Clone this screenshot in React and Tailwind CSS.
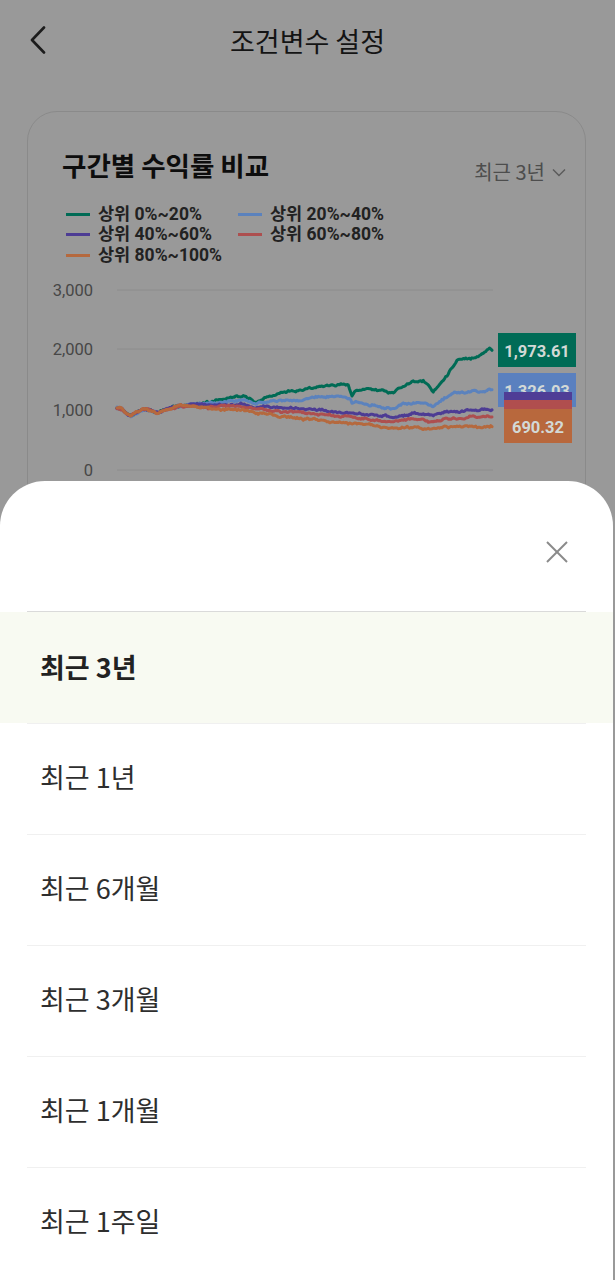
import React from "react";

const KR = '"Noto Sans CJK KR", "Noto Sans", sans-serif';
const RB = 'Roboto, "Noto Sans CJK KR", sans-serif';

function mulberry32(a) {
  return function () {
    a |= 0;
    a = (a + 0x6d2b79f5) | 0;
    let t = Math.imul(a ^ (a >>> 15), 1 | a);
    t = (t + Math.imul(t ^ (t >>> 7), 61 | t)) ^ t;
    return ((t ^ (t >>> 14)) >>> 0) / 4294967296;
  };
}

const START = [
  [117, 409], [122, 410], [127, 415], [131, 417], [136, 414], [143, 410],
  [150, 411], [158, 414], [165, 411], [172, 409], [180, 407],
];

const SERIES = [
  {
    color: "#006b55",
    seed: 11,
    keys: [
      [195, 405], [210, 403], [225, 400], [243, 397], [250, 400], [257, 403],
      [270, 398], [285, 393], [300, 391], [320, 388], [340, 386], [348, 387],
      [352, 398], [356, 392], [365, 390], [380, 392], [393, 395], [400, 390],
      [413, 383], [423, 382], [430, 388], [433, 393], [440, 385], [447, 377],
      [452, 370], [457, 362], [465, 360], [473, 360], [480, 357], [486, 353],
      [490, 349], [493, 352],
    ],
  },
  {
    color: "#5b82bd",
    seed: 23,
    keys: [
      [195, 406], [210, 404], [225, 403], [243, 401], [257, 404], [270, 402],
      [285, 402], [300, 402], [320, 398], [340, 397], [350, 400], [352, 405],
      [356, 403], [370, 405], [385, 408], [393, 410], [400, 407], [413, 403],
      [425, 404], [433, 408], [440, 403], [453, 394], [465, 394], [475, 392],
      [485, 393], [490, 390], [493, 392],
    ],
  },
  {
    color: "#4d3c94",
    seed: 37,
    keys: [
      [210, 406], [243, 405], [257, 408], [280, 409], [300, 410], [320, 411],
      [340, 412], [352, 414], [370, 415], [393, 418], [413, 414], [433, 416],
      [445, 412], [460, 413], [475, 411], [490, 410], [493, 411],
    ],
  },
  {
    color: "#ad4f4f",
    seed: 41,
    keys: [
      [210, 408], [243, 407], [257, 410], [280, 413], [300, 414], [320, 415],
      [352, 418], [370, 420], [393, 422], [413, 420], [433, 423], [445, 419],
      [460, 419], [475, 418], [490, 418], [493, 419],
    ],
  },
  {
    color: "#b5693e",
    seed: 53,
    keys: [
      [210, 410], [243, 411], [257, 414], [280, 417], [300, 419], [320, 421],
      [352, 424], [370, 426], [393, 430], [413, 428], [433, 430], [445, 427],
      [460, 427], [475, 428], [490, 428], [493, 428],
    ],
  },
];

function interp(keys, x) {
  for (let i = 0; i < keys.length - 1; i++) {
    const [x0, y0] = keys[i];
    const [x1, y1] = keys[i + 1];
    if (x >= x0 && x <= x1) {
      const t = (x - x0) / (x1 - x0 || 1);
      return y0 + (y1 - y0) * t;
    }
  }
  return keys[keys.length - 1][1];
}

function makePath(keys, seed) {
  const rand = mulberry32(seed);
  const all = [...START, ...keys];
  let r = 0;
  const pts = [];
  for (let x = 117; x <= 493; x += 1.25) {
    r += (rand() - 0.5) * 1.6;
    r *= 0.8;
    const y = interp(all, x) + r + (rand() - 0.5) * 1.2;
    pts.push(`${(x - 28).toFixed(2)},${(y - 270).toFixed(2)}`);
  }
  return "M" + pts.join(" L");
}

const PATHS = SERIES.map((s) => ({ color: s.color, d: makePath(s.keys, s.seed) }));

const LABELS = [
  { color: "#006b56", x: 470, y: 64, w: 78, text: "1,973.61" },
  { color: "#5a80bf", x: 470, y: 104, w: 78, text: "1,326.03" },
  { color: "#4f3d96", x: 476, y: 123, w: 68, text: "" },
  { color: "#b04e4e", x: 476, y: 131, w: 68, text: "" },
  { color: "#b8683d", x: 476, y: 140, w: 68, text: "690.32" },
];

const LEGEND = [
  ["#006b55", "상위 0%~20%"],
  ["#5b82bd", "상위 20%~40%"],
  ["#4d3c94", "상위 40%~60%"],
  ["#ad4f4f", "상위 60%~80%"],
  ["#b5693e", "상위 80%~100%"],
];

const OPTIONS = ["최근 3년", "최근 1년", "최근 6개월", "최근 3개월", "최근 1개월", "최근 1주일"];

function Chart() {
  const grid = [
    [21, "3,000"],
    [80, "2,000"],
    [141, "1,000"],
    [201, "0"],
  ];
  return (
    <svg width="557" height="240" className="block mt-[3px]" style={{ fontFamily: RB }}>
      {grid.map(([y, t]) => (
        <g key={t}>
          {t !== "1,000" && (
            <line x1="89" x2="465" y1={y} y2={y} stroke="#8c8c8c" strokeWidth="1" />
          )}
          <text x="65" y={y} textAnchor="end" dominantBaseline="central" fontSize="16.5" fill="#474747">
            {t}
          </text>
        </g>
      ))}
      {PATHS.map((p, i) => (
        <path key={i} d={p.d} fill="none" stroke={p.color} strokeWidth="3" strokeLinejoin="round" strokeLinecap="round" />
      ))}
      {LABELS.map((l, i) => (
        <g key={i}>
          <rect x={l.x} y={l.y} width={l.w} height="34" fill={l.color} />
          {l.text && (
            <text
              x={l.x + l.w / 2}
              y={l.y + 18}
              textAnchor="middle"
              dominantBaseline="central"
              fontSize="16.5"
              fontWeight="700"
              fill="#d3d9d6"
            >
              {l.text}
            </text>
          )}
        </g>
      ))}
    </svg>
  );
}

export default function App() {
  return (
    <div className="relative w-[615px] h-[1280px] overflow-hidden bg-[#999999]" style={{ fontFamily: KR }}>
      {/* Header */}
      <div className="grid grid-cols-[60px_1fr_60px] items-center h-[80px]">
        <div className="pl-[30px] flex items-center">
          <svg width="16" height="28" viewBox="0 0 16 28">
            <polyline points="14,1.5 2,14 14,26.5" fill="none" stroke="#1c1c1c" strokeWidth="2.6" strokeLinecap="round" strokeLinejoin="round" />
          </svg>
        </div>
        <div className="text-center text-[27px] text-[#141414] leading-none">조건변수 설정</div>
        <div />
      </div>

      {/* Card */}
      <div className="mx-[27px] mt-[31px] w-[559px] h-[500px] rounded-[30px] border border-[#8a8a8a]">
        <div className="flex justify-between items-start pl-[34px] pr-[19px] pt-[37px]">
          <div className="text-[26.5px] font-bold leading-[31px] text-[#0d0d0d]">구간별 수익률 비교</div>
          <div className="mt-[11px] flex items-center gap-[7px] text-[20px] leading-[24px] text-[#4d4d4d]">
            <span>최근 3년</span>
            <svg width="14" height="9" viewBox="0 0 14 9">
              <polyline points="1,1.5 7,7.5 13,1.5" fill="none" stroke="#5a5a5a" strokeWidth="1.4" />
            </svg>
          </div>
        </div>
        <div className="mt-[20px] pl-[38px] grid grid-cols-[172px_1fr]" style={{ fontFamily: RB }}>
          {LEGEND.map(([c, t]) => (
            <div key={t} className="flex items-center gap-[8px] h-[20.5px]">
              <span className="w-[24px] h-[3px]" style={{ backgroundColor: c }} />
              <span className="text-[17.5px] font-bold text-[#222222] leading-none">{t}</span>
            </div>
          ))}
        </div>
        <Chart />
      </div>

      {/* Bottom sheet */}
      <div className="absolute left-0 top-[481px] w-[613px] h-[799px] bg-white rounded-t-[45px]">
        <div className="h-[130px] flex justify-end items-start pt-[60px] pr-[45px]">
          <svg width="22" height="22" viewBox="0 0 22 22">
            <line x1="1" y1="1" x2="21" y2="21" stroke="#8a8a8a" strokeWidth="2" />
            <line x1="21" y1="1" x2="1" y2="21" stroke="#8a8a8a" strokeWidth="2" />
          </svg>
        </div>
        <div className="mx-[27px] border-t border-[#dadada]" />
        <div className="flex flex-col">
          {OPTIONS.map((o, i) => (
            <div key={o} className="flex flex-col">
              {i > 1 && <div className="mx-[27px] border-t border-[#f0f0f0]" />}
              <div
                className={
                  i === 0
                    ? "h-[111px] flex items-center pl-[40px] bg-[#f8faf2] text-[27px] font-bold text-[#222222]"
                    : "h-[110px] flex items-center pl-[40px] pb-[3px] text-[27px] text-[#2e2e2e]"
                }
              >
                {o}
              </div>
              {i === 0 && <div className="mx-[27px] border-t border-[#f0f0f0]" />}
            </div>
          ))}
        </div>
      </div>
    </div>
  );
}
